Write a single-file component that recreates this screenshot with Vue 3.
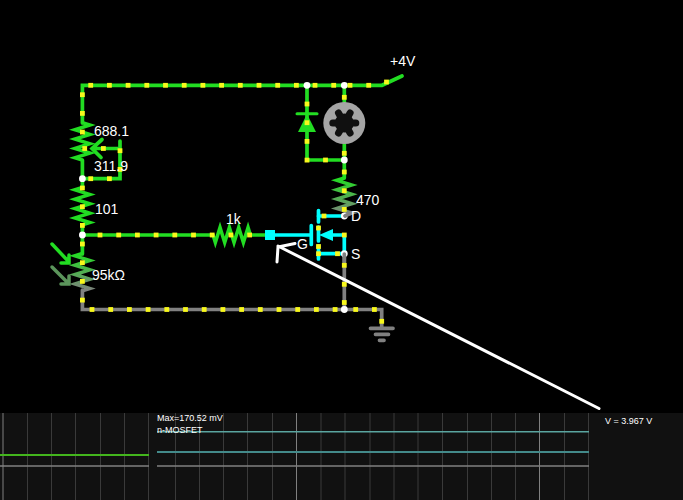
<template>
  <main class="simulator">
    <svg class="circuit" viewBox="0 0 683 413" role="img" aria-label="Circuit">
      <defs>
        <linearGradient id="ldrFade" gradientUnits="userSpaceOnUse" x1="0" y1="253" x2="0" y2="291">
          <stop offset="0" stop-color="#22dd22" />
          <stop offset="1" stop-color="#808080" />
        </linearGradient>
        <linearGradient id="loadFade" gradientUnits="userSpaceOnUse" x1="0" y1="178" x2="0" y2="216">
          <stop offset="0" stop-color="#22dd22" />
          <stop offset="1" stop-color="#808080" />
        </linearGradient>
      </defs>

      <!-- wires -->
      <g class="wire live">
        <path d="M82.4 123V85.3H382L402 76" />
        <path d="M82.4 160V188M82.4 225V254M82.4 235H213M250 235H266" />
        <path d="M307 85.3V160H344.3M344.3 85.3V103M344.3 143V178" />
        <path d="M82.4 178.7H120V141M120 148.5H93M102 139.5L92 148.5L101 157.5" />
        <path class="thin" d="M297 113.7H317" />
      </g>
      <g class="wire ground">
        <path d="M82.4 290V309.5H381.7V328" />
        <path d="M344.3 254V309.5" />
        <path d="M370.5 328.3H393M375.5 334.3H388.5M379.5 340.3H384" />
      </g>

      <!-- resistors -->
      <path
        v-for="r in resistors"
        :key="r.name"
        class="zigzag"
        :d="zigzag(r)"
        :stroke="r.stroke"
      />

      <!-- light on the photoresistor -->
      <path class="light" stroke="#22dd22" d="M52 244L69 262M69 255V263H61" />
      <path class="light" stroke="#5b955b" d="M52 267L69 284M69 276V284H61" />

      <!-- diode and motor -->
      <path fill="#22dd22" d="M307 114L316 132H298Z" />
      <circle cx="344.3" cy="123" r="21" fill="#a5a5a5" />
      <circle cx="344.3" cy="123" r="9.5" fill="#101010" />
      <path class="rotor" d="M332.8 123H355.8M338.5 113L350.1 133M350.1 113L338.5 133" />

      <!-- mosfet -->
      <g class="wire selected">
        <path d="M275 235H311M318.5 216H344.3M318.5 253.7H344.3V235H332" />
        <path d="M311.3 225.5V244.5M318.5 210.5V222M318.5 227V241M318.5 246V259" />
      </g>
      <path fill="#00ffff" d="M319 235L333 229V241Z" />
      <rect x="265" y="230" width="10" height="10" fill="#00ffff" />

      <circle v-for="(p, i) in posts" :key="i" :cx="p[0]" :cy="p[1]" r="3.4" fill="#fff" />
      <path class="wire" stroke="#808080" d="M344.3 254V262M345 216L351 213" />

      <!-- current -->
      <rect
        v-for="(d, i) in dots"
        :key="i"
        :x="d[0] - 2.4"
        :y="d[1] - 2.4"
        width="4.8"
        height="4.8"
        fill="#f8f81c"
      />

      <text v-for="l in labels" :key="l.text" class="label" :x="l.x" :y="l.y">{{ l.text }}</text>

      <!-- hand drawn pointer -->
      <path class="pointer" d="M599 408.5L278 246M277 262L278 247L295 243.5" />
    </svg>

    <section class="scopes">
      <svg viewBox="0 0 157 87" role="img" aria-label="Scope 1">
        <path class="grid" d="M27.5 0V87M51.5 0V87M75.5 0V87M100.5 0V87M124.5 0V87M148.5 0V87" />
        <path class="major" d="M3 0V87" />
        <path class="axis" d="M0 53H149" />
        <path stroke="#43b51d" stroke-width="2" d="M0 42H149" />
      </svg>
      <svg viewBox="0 0 432 87" role="img" aria-label="Scope 2">
        <path v-for="x in gridLines" :key="x" class="grid" :d="`M${x} 0V87`" />
        <path class="major" d="M139.5 0V87M382.5 0V87" />
        <path class="axis" d="M0 53H432" />
        <path stroke="#5aa5a0" stroke-width="1.4" d="M0 18.7H432" />
        <path stroke="#438a8a" stroke-width="2" d="M0 39H432" />
        <text class="caption" x="0" y="8">Max=170.52 mV</text>
        <text class="caption" x="0" y="20">n-MOSFET</text>
      </svg>
      <p class="readout">V = 3.967 V</p>
    </section>
  </main>
</template>

<script setup>
const resistors = [
  { name: 'potentiometer', x: 82.4, y: 122.7, side: 1, stroke: '#22dd22' },
  { name: 'r101', x: 82.4, y: 187.5, side: -1, stroke: '#22dd22' },
  { name: 'ldr', x: 82.4, y: 253.5, side: -1, stroke: 'url(#ldrFade)' },
  { name: 'r470', x: 344.3, y: 178, side: -1, stroke: 'url(#loadFade)' },
  { name: 'r1k', x: 213, y: 235, side: 1, flat: true, stroke: '#22dd22' }
]

// eight peaks, alternating sides, along a body 37.4 long
function zigzag(r) {
  const step = 37.4 / 16
  const at = (along, off) =>
    r.flat ? `${r.x + along} ${r.y + off}` : `${r.x + off} ${r.y + along}`
  let d = `M${at(0, 0)}`
  for (let i = 0; i < 8; i++) {
    d += `L${at(step * (2 * i + 1), 7.5 * r.side * (i % 2 ? -1 : 1))}`
  }
  return d + `L${at(37.4, 0)}`
}

const posts = [
  [307, 85.3], [344.3, 85.3], [344.3, 160], [82.4, 178.7],
  [82.4, 235], [344.3, 309.5], [344.3, 216], [344.3, 253.7]
]

const gap = 18.7
function run(x, y, count, down = false) {
  return Array.from({ length: count }, (_, i) =>
    down ? [x, y + gap * i] : [x + gap * i, y]
  )
}

const dots = [
  ...run(90.7, 85.3, 12),
  ...run(315, 85.3, 2),
  ...run(350, 85.3, 2),
  [386.5, 82],
  ...run(82.4, 94.7, 3, true),
  ...run(84.7, 148.5, 2),
  ...run(120, 150.7, 2, true),
  ...run(90.7, 178.7, 2),
  ...run(82.4, 188, 3, true),
  ...run(82.4, 244, 4, true),
  ...run(100, 235, 9),
  ...run(92, 309.5, 14),
  ...run(355.7, 309.5, 2),
  [381.7, 321.3],
  ...run(307, 104, 4, true),
  [325.5, 160],
  [344.3, 97.3],
  ...run(344.3, 153.3, 4, true),
  [324, 216],
  [318.5, 228], [318.5, 246.5], [318.5, 253.7],
  [337.5, 253.7], [344.3, 235],
  [344.3, 265.3], [344.3, 284.3], [344.3, 302.5]
]

const labels = [
  { text: '+4V', x: 390, y: 66 },
  { text: '688.1', x: 94, y: 136 },
  { text: '311.9', x: 94, y: 171 },
  { text: '101', x: 95, y: 214 },
  { text: '95kΩ', x: 92, y: 280 },
  { text: '1k', x: 226, y: 224 },
  { text: '470', x: 356, y: 205 },
  { text: 'G', x: 297, y: 249 },
  { text: 'D', x: 351, y: 221 },
  { text: 'S', x: 351, y: 259 }
]

const gridLines = [
  18.5, 42.5, 66.5, 90.5, 115.5, 164, 188, 213, 237,
  261, 285.5, 310.5, 334.5, 358.5, 407.5, 431.5
]
</script>

<style>
body {
  margin: 0;
  background: #000;
}
</style>

<style scoped>
.simulator {
  background: #000;
  color: #fff;
  font-family: "Liberation Sans", Arial, sans-serif;
}

svg {
  display: block;
  width: 100%;
  fill: none;
}

.wire {
  stroke-width: 3.7;
  stroke-linecap: round;
}

.live {
  stroke: #22dd22;
}

.ground {
  stroke: #808080;
}

.selected {
  stroke: #00ffff;
}

.thin {
  stroke-width: 3;
}

.zigzag {
  stroke-width: 3.5;
  stroke-miterlimit: 6;
}

.light {
  stroke-width: 3.5;
  stroke-linecap: round;
}

.rotor {
  stroke: #101010;
  stroke-width: 7;
  stroke-linecap: round;
}

.pointer {
  stroke: #fff;
  stroke-width: 3;
  stroke-linecap: round;
}

.label {
  fill: #fff;
  font-size: 14px;
}

.scopes {
  display: grid;
  grid-template-columns: 157fr 432fr 94fr;
  background: #111;
}

.grid {
  stroke: #3a3a3a;
}

.major {
  stroke: #808080;
}

.axis {
  stroke: #808080;
  stroke-width: 1.4;
}

.caption {
  fill: #fff;
  font-size: 9px;
}

.readout {
  margin: 0;
  padding: 2px 0 0 16px;
  font-size: 9px;
  line-height: 12px;
  white-space: nowrap;
}
</style>
